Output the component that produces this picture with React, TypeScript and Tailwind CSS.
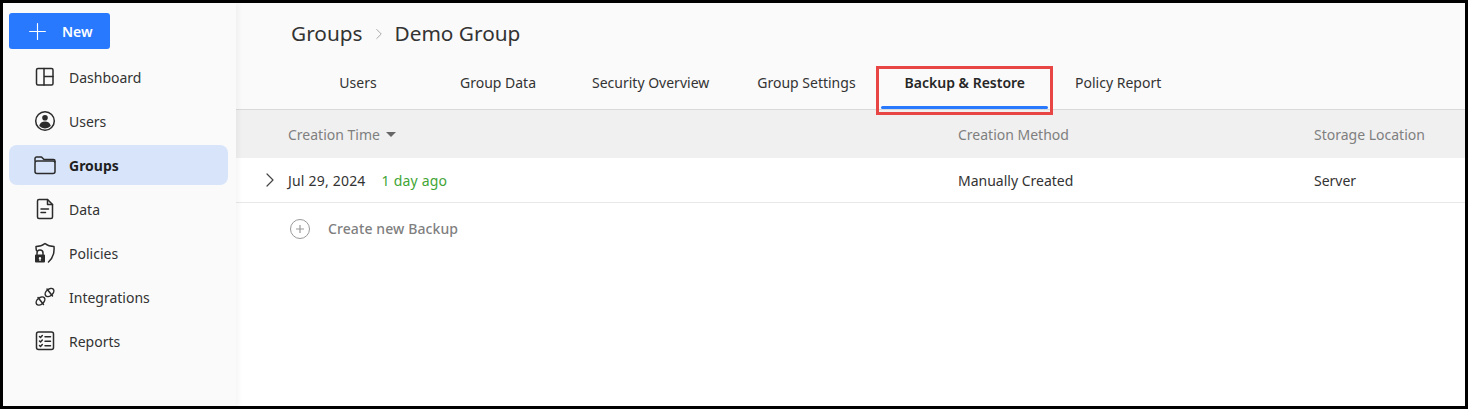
import { ChevronRight, Plus } from 'lucide-react';
import type { ReactNode } from 'react';

const NAV_ITEMS: { label: string; icon: ReactNode; active?: boolean }[] = [
  {
    label: 'Dashboard',
    icon: (
      <>
        <rect x="2.5" y="2.5" width="16.5" height="16.5" rx="1.5" />
        <path d="M10 2.5v16.5M10 10.5h9" />
      </>
    ),
  },
  {
    label: 'Users',
    icon: (
      <>
        <circle cx="11" cy="11" r="9.3" />
        <circle cx="11" cy="7.8" r="2.8" fill="currentColor" stroke="none" />
        <path d="M5.2 16c.6-3 3-4.4 5.8-4.4s5.2 1.4 5.8 4.4a8 8 0 0 1-11.6 0z" fill="currentColor" stroke="none" />
      </>
    ),
  },
  {
    label: 'Groups',
    active: true,
    icon: (
      <>
        <path d="M1 7V4.5A1.500 1.500 0 0 1 2.500 3h5l2.500 2.500h9.500A1.500 1.500 0 0 1 21 7v1" />
        <rect x="1" y="7" width="20" height="12.5" rx="2" />
      </>
    ),
  },
  {
    label: 'Data',
    icon: (
      <>
        <path d="M5 1.500h8.500l5 5V19a1.500 1.500 0 0 1-1.500 1.500H5A1.500 1.500 0 0 1 3.500 19V3A1.500 1.500 0 0 1 5 1.500z" />
        <path d="M13.500 1.500v5h5M7 11h7.500M7 14.500h4.500" />
      </>
    ),
  },
  {
    label: 'Policies',
    icon: (
      <>
        <path d="M2.500 8.500C2 7 2 5.500 2 4.500 5.500 4.500 8.500 3.500 11 1.500c2.500 2 5.500 3 9 3 .5 6-1.500 12-5.500 15.500" />
        <path d="M3 12.500v-1.500a3 3 0 0 1 6 0v1.500" />
        <path
          fillRule="evenodd"
          d="M2 12.500h8a1 1 0 0 1 1 1v6a1 1 0 0 1-1 1H2a1 1 0 0 1-1-1v-6a1 1 0 0 1 1-1zM6 15a1.300 1.300 0 0 0-.6 2.400V19h1.200v-1.600A1.300 1.300 0 0 0 6 15z"
          fill="currentColor"
          stroke="none"
        />
      </>
    ),
  },
  {
    label: 'Integrations',
    icon: (
      <>
        <ellipse cx="15.5" cy="6.5" rx="5" ry="3.200" transform="rotate(-40 15.500 6.500)" />
        <ellipse cx="6.5" cy="15" rx="5" ry="3.200" transform="rotate(-40 6.500 15)" />
        <path d="M13 3l5.500 7M4 11.500l5.500 7" />
      </>
    ),
  },
  {
    label: 'Reports',
    icon: (
      <>
        <rect x="2.5" y="2" width="17" height="17.5" rx="2" />
        <path d="M5.500 6.500l1 1 1.800-2M5.500 11l1 1 1.800-2M5.500 15.500l1 1 1.800-2M11 6.800h5.500M11 11.300h5.500M11 15.800h5.500" />
      </>
    ),
  },
];

const TABS = [
  { label: 'Users', style: 'min-w-[140px]' },
  { label: 'Group Data', style: 'min-w-[140px]' },
  { label: 'Security Overview', style: '' },
  { label: 'Group Settings', style: '' },
  { label: 'Backup & Restore', style: 'ml-[1px]', active: true },
  { label: 'Policy Report', style: 'ml-[2px]' },
];

function NavIcon({ children }: { children: ReactNode }) {
  return (
    <svg
      viewBox="0 0 22 22"
      className="h-[22px] w-[22px] shrink-0 text-[#2b2b2b]"
      fill="none"
      stroke="currentColor"
      strokeWidth="1.5"
      strokeLinecap="round"
      strokeLinejoin="round"
    >
      {children}
    </svg>
  );
}

function Sidebar() {
  return (
    <aside className="z-10 flex w-[233px] shrink-0 flex-col bg-[#fafafa] pl-[6px] pr-[8px] pt-[10px] shadow-[2px_0_6px_rgba(0,0,0,0.05)]">
      <button className="mb-[8px] flex h-[36px] w-[101px] items-center rounded-[3px] bg-[#2979ff] pl-[15px] text-[14px] font-semibold text-white">
        <Plus size={27} strokeWidth={1} className="mr-[11px] shrink-0" />
        New
      </button>
      {NAV_ITEMS.map((item) => (
        <div
          key={item.label}
          className={`mb-[4px] flex h-[40px] items-center gap-[13px] rounded-[8px] pl-[25px] text-[14px] ${
            item.active ? 'bg-[#d7e4fa] font-bold text-[#1f1f1f]' : 'text-[#333333]'
          }`}
        >
          <NavIcon>{item.icon}</NavIcon>
          {item.label}
        </div>
      ))}
    </aside>
  );
}

function Header() {
  return (
    <header className="h-[107px] shrink-0 border-b border-[#d9d9d9] bg-[#fafafa]">
      <div className="flex h-[61px] items-center pl-[55px] text-[20.8px] text-[#333333]">
        Groups
        <ChevronRight size={18} strokeWidth={1} className="mx-[7px] text-[#8c8c8c]" />
        Demo Group
      </div>
      <nav className="flex h-[45px] pl-[52px] text-[14px] text-[#333333]">
        {TABS.map((tab) => (
          <div key={tab.label} className={`relative flex h-full justify-center px-[24px] pt-[8px] ${tab.style}`}>
            <span className={tab.active ? 'font-semibold text-[#262626]' : ''}>{tab.label}</span>
            {tab.active && (
              <>
                <span className="absolute left-0 right-[1px] bottom-0 h-[3px] rounded-full bg-[#2979ff]" />
                <span className="absolute left-[-5px] right-[-4px] top-[2px] bottom-[-6px] border-[3px] border-[#e84545]" />
              </>
            )}
          </div>
        ))}
      </nav>
    </header>
  );
}

function BackupTable() {
  return (
    <div className="flex-1 bg-white text-[14px]">
      <div className="grid h-[48px] grid-cols-[670px_356px_1fr] items-center bg-[#f0f0f0] pl-[52px] text-[#7f7f7f]">
        <div className="flex items-center gap-[6px]">
          Creation Time
          <span className="h-0 w-0 border-x-[5px] border-t-[5px] border-x-transparent border-t-[#666666]" />
        </div>
        <div>Creation Method</div>
        <div>Storage Location</div>
      </div>
      <div className="grid h-[45px] grid-cols-[670px_356px_1fr] items-center border-b border-[#e8e8e8] pl-[52px] text-[#333333]">
        <div className="relative flex items-center">
          <ChevronRight size={24} strokeWidth={1.2} className="absolute left-[-30px] text-[#444444]" />
          <span className="tracking-[0.2px]">Jul 29, 2024</span>
          <span className="ml-[16px] tracking-[0.2px] text-[#3fa535]">1 day ago</span>
        </div>
        <div>Manually Created</div>
        <div>Server</div>
      </div>
      <div className="flex h-[51px] items-center gap-[18px] pl-[54px] font-medium tracking-[0.1px] text-[#7f7f7f]">
        <svg viewBox="0 0 20 20" className="h-[20px] w-[20px]" fill="none" stroke="#999999" strokeWidth="1">
          <circle cx="10" cy="10" r="9.5" />
          <path d="M10 6v8M6 10h8" strokeWidth="1.2" />
        </svg>
        Create new Backup
      </div>
    </div>
  );
}

export default function App() {
  return (
    <div className="flex h-[409px] w-[1468px] overflow-hidden border-[3px] border-black bg-white font-['Noto_Sans','Open_Sans',sans-serif]">
      <Sidebar />
      <main className="flex min-w-0 flex-1 flex-col">
        <Header />
        <BackupTable />
      </main>
    </div>
  );
}
